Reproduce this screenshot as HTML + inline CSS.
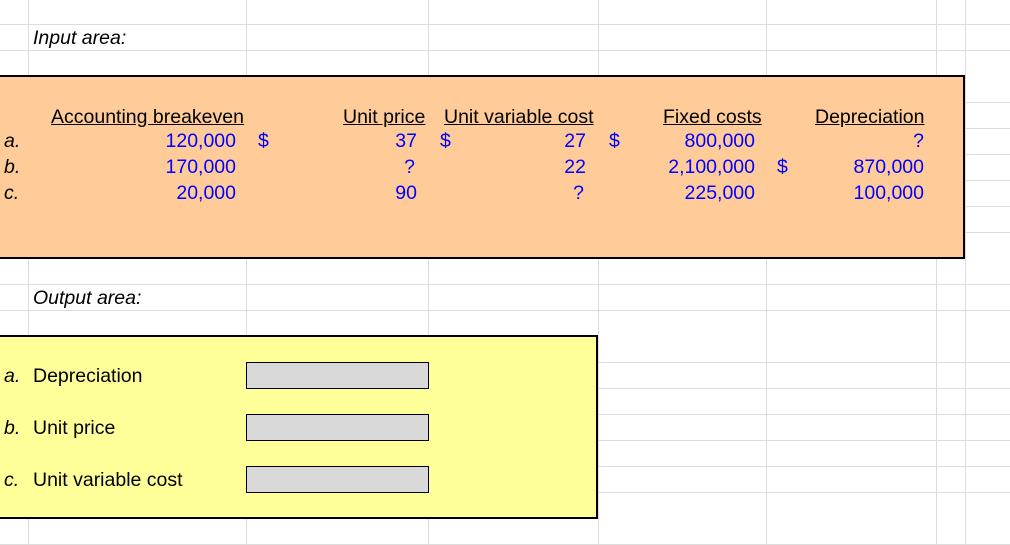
<!DOCTYPE html>
<html><head><meta charset="utf-8"><style>
html,body{margin:0;padding:0;}
body{width:1010px;height:545px;position:relative;overflow:hidden;background:#fff;font-family:"Liberation Sans",Arial,sans-serif;font-size:19.5px;}
.h{position:absolute;left:0;width:1010px;height:1px;background:#dcdcdc;}
.v{position:absolute;top:0;height:545px;width:1px;background:#dcdcdc;}
.t{position:absolute;height:26px;line-height:26px;white-space:nowrap;}
.b{color:#0000ff;}
.r{text-align:right;}
.u{text-decoration:underline;}
.i{font-style:italic;}
.box{position:absolute;box-sizing:border-box;border:2px solid #000;}
.g{position:absolute;box-sizing:border-box;border:1px solid #000;background:#d9d9d9;width:183px;height:27px;left:246px;}
</style></head><body>
<div class="h" style="top:24px"></div><div class="h" style="top:50px"></div>
<div class="h" style="top:102px"></div><div class="h" style="top:128px"></div><div class="h" style="top:154px"></div><div class="h" style="top:180px"></div><div class="h" style="top:206px"></div><div class="h" style="top:232px"></div>
<div class="h" style="top:284px"></div><div class="h" style="top:310px"></div>
<div class="h" style="top:362px"></div><div class="h" style="top:388px"></div><div class="h" style="top:414px"></div><div class="h" style="top:440px"></div><div class="h" style="top:466px"></div><div class="h" style="top:492px"></div><div class="h" style="top:544px"></div>
<div class="v" style="left:28px"></div><div class="v" style="left:246px"></div><div class="v" style="left:428px"></div><div class="v" style="left:598px"></div><div class="v" style="left:766px"></div><div class="v" style="left:936px"></div><div class="v" style="left:965px"></div>

<div class="t i" style="left:33px;top:25px">Input area:</div>
<div class="t i" style="left:33px;top:285px">Output area:</div>

<div class="box" style="left:-2px;top:75px;width:967px;height:184px;background:#ffcc99"></div>

<div class="t u" style="left:51px;top:104px">Accounting breakeven</div>
<div class="t u" style="left:343px;top:104px">Unit price</div>
<div class="t u" style="left:444px;top:104px">Unit variable cost</div>
<div class="t u" style="left:663px;top:104px">Fixed costs</div>
<div class="t u" style="left:815px;top:104px">Depreciation</div>

<div class="t i" style="left:4px;top:128px">a.</div>
<div class="t i" style="left:4px;top:154px">b.</div>
<div class="t i" style="left:4px;top:180px">c.</div>

<div class="t b r" style="right:774px;top:128px">120,000</div>
<div class="t b" style="left:258px;top:128px">$</div>
<div class="t b r" style="right:593px;top:128px">37</div>
<div class="t b" style="left:440px;top:128px">$</div>
<div class="t b r" style="right:424px;top:128px">27</div>
<div class="t b" style="left:609px;top:128px">$</div>
<div class="t b r" style="right:255px;top:128px">800,000</div>
<div class="t b r" style="right:86px;top:128px">?</div>

<div class="t b r" style="right:774px;top:154px">170,000</div>
<div class="t b r" style="right:595px;top:154px">?</div>
<div class="t b r" style="right:424px;top:154px">22</div>
<div class="t b r" style="right:255px;top:154px">2,100,000</div>
<div class="t b" style="left:777px;top:154px">$</div>
<div class="t b r" style="right:86px;top:154px">870,000</div>

<div class="t b r" style="right:774px;top:180px">20,000</div>
<div class="t b r" style="right:593px;top:180px">90</div>
<div class="t b r" style="right:426px;top:180px">?</div>
<div class="t b r" style="right:255px;top:180px">225,000</div>
<div class="t b r" style="right:86px;top:180px">100,000</div>

<div class="box" style="left:-2px;top:335px;width:600px;height:184px;background:#ffff99"></div>
<div class="t i" style="left:4px;top:363px">a.</div><div class="t" style="left:33px;top:363px">Depreciation</div>
<div class="t i" style="left:4px;top:415px">b.</div><div class="t" style="left:33px;top:415px">Unit price</div>
<div class="t i" style="left:4px;top:467px">c.</div><div class="t" style="left:33px;top:467px">Unit variable cost</div>
<div class="g" style="top:362px"></div>
<div class="g" style="top:414px"></div>
<div class="g" style="top:466px"></div>
</body></html>
